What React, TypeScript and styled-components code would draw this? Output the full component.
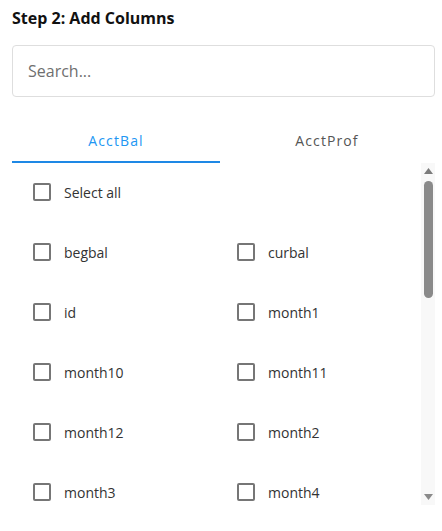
import React, { useState } from "react";
import styled, { createGlobalStyle } from "styled-components";

const GlobalStyle = createGlobalStyle`
  html, body {
    margin: 0;
    padding: 0;
    background: #ffffff;
    font-family: "Open Sans", "Noto Sans", sans-serif;
  }
  * {
    box-sizing: border-box;
  }
`;

const columns = [
  "begbal",
  "curbal",
  "id",
  "month1",
  "month10",
  "month11",
  "month12",
  "month2",
  "month3",
  "month4",
];

const tabs = ["AcctBal", "AcctProf"];

const App = () => {
  const [active, setActive] = useState(0);
  const [checked, setChecked] = useState<string[]>([]);

  const toggle = (name: string) => {
    setChecked((prev) =>
      prev.includes(name) ? prev.filter((c) => c !== name) : [...prev, name]
    );
  };

  const allChecked = checked.length === columns.length;

  return (
    <>
      <GlobalStyle />
      <Panel>
        <Title>Step 2: Add Columns</Title>
        <SearchBox placeholder="Search..." />
        <TabBar>
          {tabs.map((t, i) => (
            <Tab key={t} active={i === active} onClick={() => setActive(i)}>
              {t}
            </Tab>
          ))}
        </TabBar>
        <ListFrame>
          <List>
            <Row wide>
              <Check
                type="checkbox"
                checked={allChecked}
                onChange={() => setChecked(allChecked ? [] : columns)}
              />
              <Label>Select all</Label>
            </Row>
            {columns.map((c) => (
              <Row key={c}>
                <Check
                  type="checkbox"
                  checked={checked.includes(c)}
                  onChange={() => toggle(c)}
                />
                <Label>{c}</Label>
              </Row>
            ))}
          </List>
          <Rail>
            <Arrow>
              <svg width="9" height="6" viewBox="0 0 9 6">
                <path d="M4.5 0 L9 6 L0 6 Z" fill="#7b7b7b" />
              </svg>
            </Arrow>
            <Track>
              <Thumb />
            </Track>
            <Arrow>
              <svg width="9" height="6" viewBox="0 0 9 6">
                <path d="M0 0 L9 0 L4.5 6 Z" fill="#8a8a8a" />
              </svg>
            </Arrow>
          </Rail>
        </ListFrame>
      </Panel>
    </>
  );
};

export default App;

const Panel = styled.div`
  width: 423px;
  margin-left: 12px;
  padding-top: 6px;
  display: flex;
  flex-direction: column;
`;

const Title = styled.div`
  font-size: 16px;
  font-weight: 700;
  color: #111;
  line-height: 24px;
  height: 24px;
`;

const SearchBox = styled.input`
  margin-top: 15px;
  width: 100%;
  height: 52px;
  border: 1px solid #dedede;
  border-radius: 4px;
  padding: 0 15px;
  font-family: "Open Sans", "Noto Sans", sans-serif;
  font-size: 16px;
  color: #333;
  outline: none;
  &::placeholder {
    color: #6f6f6f;
  }
`;

const TabBar = styled.div`
  margin-top: 18px;
  display: grid;
  grid-template-columns: 208px 1fr;
  width: 422px;
  height: 48px;
`;

const Tab = styled.button<{ active: boolean }>`
  border: none;
  background: none;
  padding: 4px 0 0;
  font-family: "Open Sans", "Noto Sans", sans-serif;
  font-size: 14px;
  letter-spacing: 1.1px;
  color: ${(p) => (p.active ? "#2196f3" : "#555")};
  border-bottom: 2px solid ${(p) => (p.active ? "#1e88e5" : "transparent")};
  cursor: pointer;
`;

const ListFrame = styled.div`
  display: flex;
  height: 342px;
`;

const List = styled.div`
  flex: 1;
  display: grid;
  grid-template-columns: 204px 1fr;
  grid-auto-rows: 60px;
  overflow: hidden;
`;

const Row = styled.label<{ wide?: boolean }>`
  display: flex;
  align-items: center;
  padding-left: 21px;
  padding-bottom: 2px;
  grid-column: ${(p) => (p.wide ? "1 / span 2" : "auto")};
  cursor: pointer;
`;

const Check = styled.input`
  appearance: none;
  margin: 0;
  width: 18px;
  height: 18px;
  border: 2px solid #767676;
  border-radius: 2px;
  background: #fff;
  cursor: pointer;
  &:checked {
    background: #1e88e5;
    border-color: #1e88e5;
  }
`;

const Label = styled.span`
  margin-left: 13px;
  font-size: 14px;
  color: #333;
`;

const Rail = styled.div`
  width: 14px;
  background: #f8f8f8;
  display: flex;
  flex-direction: column;
  align-items: center;
`;

const Arrow = styled.div`
  height: 16px;
  display: flex;
  align-items: center;
  justify-content: center;
`;

const Track = styled.div`
  flex: 1;
  padding-top: 2px;
  display: flex;
  justify-content: center;
`;

const Thumb = styled.div`
  width: 9px;
  height: 117px;
  border-radius: 5px;
  background: #8a8a8a;
`;
